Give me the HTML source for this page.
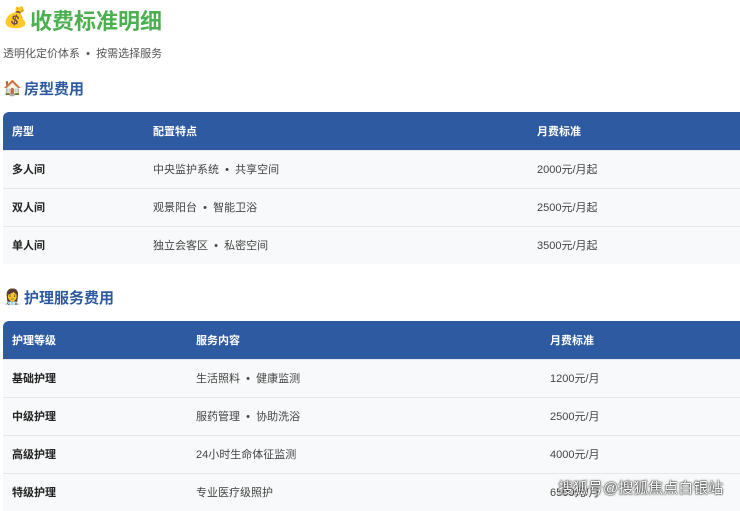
<!DOCTYPE html>
<html><head><meta charset="utf-8"><style>
*{margin:0;padding:0;box-sizing:border-box}
body{width:740px;height:503px;overflow:hidden;background:#fff;font-family:"Liberation Sans","Noto Sans CJK SC",sans-serif;position:relative}
.a{position:absolute;white-space:nowrap}
h1{position:absolute;left:30px;top:4px;font-size:22px;color:#4caf50;font-weight:bold}
.sub{left:3px;top:45px;font-size:11px;color:#555}
h2{position:absolute;font-size:15px;color:#2d5aa0;font-weight:bold;left:24px}
.ic{position:absolute;font-size:15px}
table{position:absolute;left:3px;width:745px;border-collapse:collapse;font-size:11px;color:#444}
th{background:#2d5aa0;color:#fff;text-align:left;font-weight:bold;height:38px;padding-left:9px}
td{height:38px;padding-left:9px;border-top:1px solid #e4e6ea;background:#f8f9fa}
td:first-child{font-weight:bold;color:#222}
.t1 th:first-child,.t2 th:first-child{border-top-left-radius:6px}
.wm{position:absolute;left:558px;top:477px;font-size:15px;color:#fff;text-shadow:0 0 2px #000,0 0 1px #000}
</style></head><body>
<div class="ic" style="left:3px;top:5px;font-size:20px">💰</div>
<h1>收费标准明细</h1>
<div class="a sub">透明化定价体系 &nbsp;•&nbsp; 按需选择服务</div>
<div class="ic" style="left:3px;top:79px">🏠</div>
<h2 style="top:78px">房型费用</h2>
<table class="t1" style="top:112px">
<tr><th style="width:141px">房型</th><th style="width:384px">配置特点</th><th>月费标准</th></tr>
<tr><td>多人间</td><td>中央监护系统 &nbsp;•&nbsp; 共享空间</td><td>2000元/月起</td></tr>
<tr><td>双人间</td><td>观景阳台 &nbsp;•&nbsp; 智能卫浴</td><td>2500元/月起</td></tr>
<tr><td>单人间</td><td>独立会客区 &nbsp;•&nbsp; 私密空间</td><td>3500元/月起</td></tr>
</table>
<div class="ic" style="left:3px;top:288px">👩‍⚕️</div>
<h2 style="top:287px">护理服务费用</h2>
<table class="t2" style="top:321px">
<tr><th style="width:184px">护理等级</th><th style="width:354px">服务内容</th><th>月费标准</th></tr>
<tr><td>基础护理</td><td>生活照料 &nbsp;•&nbsp; 健康监测</td><td>1200元/月</td></tr>
<tr><td>中级护理</td><td>服药管理 &nbsp;•&nbsp; 协助洗浴</td><td>2500元/月</td></tr>
<tr><td>高级护理</td><td>24小时生命体征监测</td><td>4000元/月</td></tr>
<tr><td>特级护理</td><td>专业医疗级照护</td><td>6500元/月</td></tr>
</table>
<div class="wm">搜狐号@搜狐焦点白银站</div>
</body></html>
